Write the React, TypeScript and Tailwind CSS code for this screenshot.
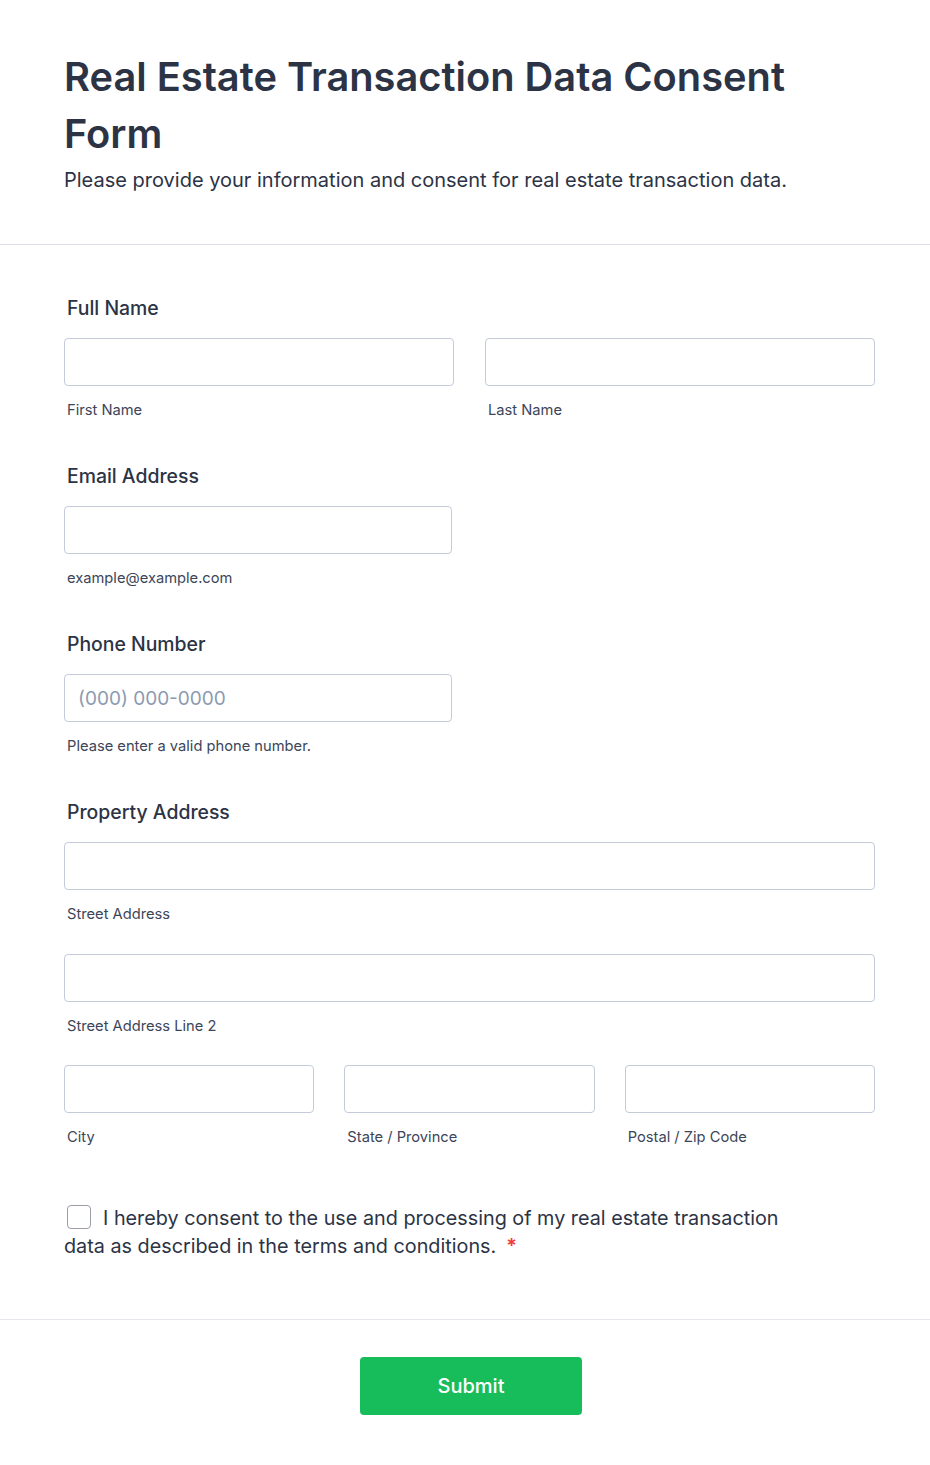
import React from 'react';

const font = { fontFamily: 'Inter, "Noto Sans", sans-serif' };

const inputCls =
  'block w-full h-12 rounded border border-[#c3cad8] bg-white px-[13px] text-[19px] text-[#2c3345] placeholder:text-[#8c9ab0] outline-none';

const Sub: React.FC<{ children: React.ReactNode }> = ({ children }) => (
  <div className="mt-[14px] pl-[3px] text-[14.7px] leading-5 text-[#3c4559]">{children}</div>
);

const Label: React.FC<{ children: React.ReactNode }> = ({ children }) => (
  <div className="pl-[3px] text-[19.4px] font-medium leading-7 text-[#2c3345]">{children}</div>
);

export default function App() {
  return (
    <div className="min-h-screen w-full bg-white" style={font}>
      <header className="border-b border-[#dfe0e8] pl-16 pr-12 pt-12 pb-[50px]">
        <h1 className="text-[39.8px] font-semibold leading-[57px] text-[#2c3345]">
          Real Estate Transaction Data Consent Form
        </h1>
        <p className="mt-1 text-[20px] leading-7 text-[#2c3345]">
          Please provide your information and consent for real estate transaction data.
        </p>
      </header>

      <main className="pl-16 pr-[55px] pt-[49px] pb-[59px] border-b border-[#e6e7ec]">
        <section>
          <Label>Full Name</Label>
          <div className="mt-4 grid grid-cols-2 gap-[31px]">
            <div>
              <input className={inputCls} />
              <Sub>First Name</Sub>
            </div>
            <div>
              <input className={inputCls} />
              <Sub>Last Name</Sub>
            </div>
          </div>
        </section>

        <section className="mt-[42px]">
          <Label>Email Address</Label>
          <div className="mt-4 w-[388px]">
            <input className={inputCls} />
            <Sub>example@example.com</Sub>
          </div>
        </section>

        <section className="mt-[42px]">
          <Label>Phone Number</Label>
          <div className="mt-4 w-[388px]">
            <input className={inputCls} placeholder="(000) 000-0000" />
            <Sub>Please enter a valid phone number.</Sub>
          </div>
        </section>

        <section className="mt-[42px]">
          <Label>Property Address</Label>
          <div className="mt-4">
            <input className={inputCls} />
            <Sub>Street Address</Sub>
          </div>
          <div className="mt-[30px]">
            <input className={inputCls} />
            <Sub>Street Address Line 2</Sub>
          </div>
          <div className="mt-[29px] grid grid-cols-3 gap-[30px]">
            <div>
              <input className={inputCls} />
              <Sub>City</Sub>
            </div>
            <div>
              <input className={inputCls} />
              <Sub>State / Province</Sub>
            </div>
            <div>
              <input className={inputCls} />
              <Sub>Postal / Zip Code</Sub>
            </div>
          </div>
        </section>

        <section className="mt-[57px] max-w-[730px] text-[19.8px] leading-7 text-[#2c3345]">
          <span className="ml-[3px] mr-3 inline-block h-6 w-6 rounded border-[1.5px] border-[#9a9ea8] align-[-4px]" />
          I hereby consent to the use and processing of my real estate transaction data as described in
          the terms and conditions.
          <span className="ml-[10px] font-semibold text-[#f23a3c]">*</span>
        </section>
      </main>

      <footer className="flex justify-center pl-16 pr-[52px] pt-[37px] pb-[50px]">
        <button className="h-[58px] w-[222px] rounded bg-[#18bd5b] text-[20px] font-medium text-white">
          Submit
        </button>
      </footer>
    </div>
  );
}
